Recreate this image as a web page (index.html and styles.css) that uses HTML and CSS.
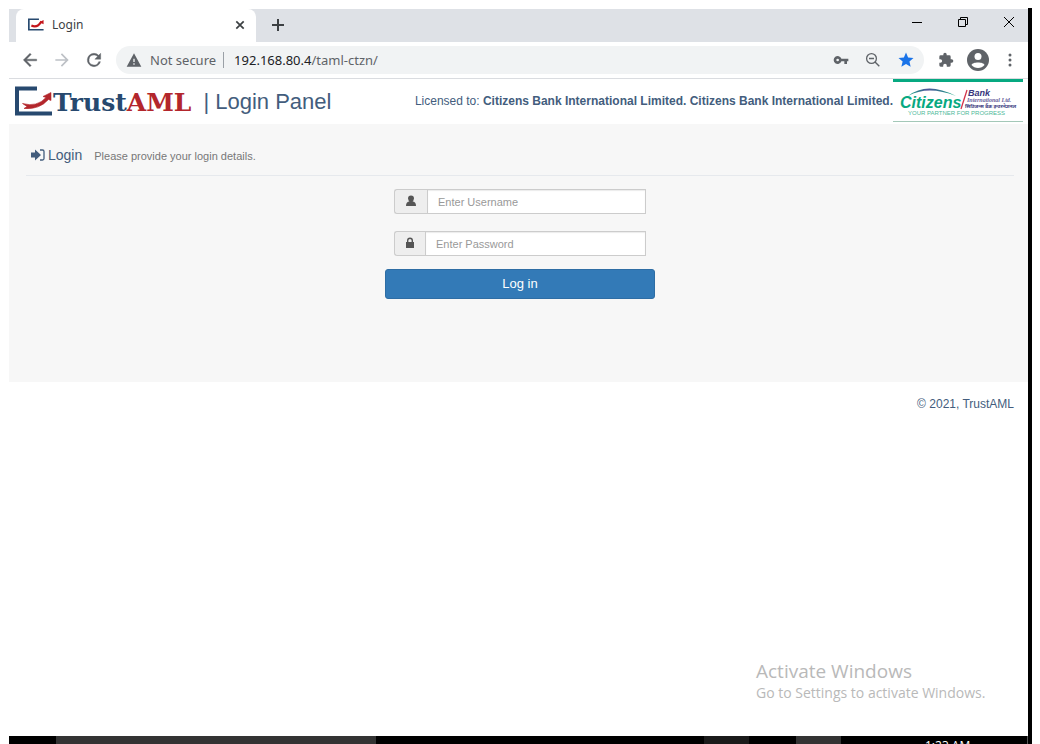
FILE: index.html
```html
<!DOCTYPE html>
<html lang="en">
<head>
<meta charset="utf-8">
<title>Login</title>
<link rel="stylesheet" href="styles.css">
</head>
<body>
<div class="screen">
  <header class="tabstrip">
    <div class="tab">
      <svg class="favicon" width="16" height="13" viewBox="0 0 38 29" aria-hidden="true"><path d="M26 2H2V27H37" fill="none" stroke="#27496f" stroke-width="4"/><path d="M8 17Q22 24 32 7" fill="none" stroke="#c4161c" stroke-width="5"/><path d="M27 9L37 4V14Z" fill="#c4161c"/></svg>
      <span class="tab-title">Login</span>
      <button class="tab-close" type="button" aria-label="Close tab"><svg width="10" height="10" viewBox="0 0 10 10"><path d="M1.3 1.3L8.7 8.7M8.7 1.3L1.3 8.7" stroke="#3c4043" stroke-width="1.7"/></svg></button>
    </div>
    <button class="new-tab" type="button" aria-label="New tab"><svg width="12" height="12" viewBox="0 0 12 12"><path d="M6 0V12M0 6H12" stroke="#3c4043" stroke-width="2"/></svg></button>
    <div class="window-controls">
      <button type="button" aria-label="Minimize"><svg width="10" height="10" viewBox="0 0 10 10"><path d="M0 5.5H10" stroke="#000"/></svg></button>
      <button type="button" aria-label="Restore"><svg width="10" height="10" viewBox="0 0 10 10"><path d="M.5 2.5H7.5V9.5H.5ZM2.5 2.5V.5H9.5V7.5H7.5" fill="none" stroke="#000"/></svg></button>
      <button type="button" aria-label="Close"><svg width="10" height="10" viewBox="0 0 10 10"><path d="M0 0L10 10M10 0L0 10" stroke="#000"/></svg></button>
    </div>
  </header>

  <nav class="toolbar">
    <button type="button" aria-label="Back"><svg width="20" height="20" viewBox="0 0 24 24"><path d="M20 11H7.8l5.6-5.6L12 4l-8 8 8 8 1.4-1.4L7.8 13H20z" fill="#5f6368" stroke="#5f6368" stroke-width=".5"/></svg></button>
    <button type="button" aria-label="Forward"><svg width="20" height="20" viewBox="0 0 24 24"><path d="M12 4l-1.4 1.4 5.6 5.6H4v2h12.2l-5.6 5.6L12 20l8-8z" fill="#bdc1c6"/></svg></button>
    <button type="button" aria-label="Reload"><svg width="20" height="20" viewBox="0 0 24 24"><path d="M17.65 6.35A7.96 7.96 0 0 0 12 4a8 8 0 1 0 7.73 10h-2.08A6 6 0 1 1 12 6c1.66 0 3.14.69 4.22 1.78L13 11h7V4z" fill="#5f6368" stroke="#5f6368" stroke-width=".5"/></svg></button>
    <div class="omnibox">
      <svg width="16" height="16" viewBox="0 0 24 24" aria-hidden="true"><path d="M1 22H23L12 2zM13 19H11V17H13zM13 15H11V10H13z" fill="#5f6368" fill-rule="evenodd"/></svg>
      <span class="security">Not secure</span>
      <span class="url"><span class="host">192.168.80.4</span>/taml-ctzn/</span>
      <span class="omnibox-actions">
        <svg width="16" height="16" viewBox="0 0 24 24" aria-hidden="true"><path d="M12.65 10A6 6 0 1 0 12.65 14H17V18H21V14H23V10ZM7 14A2 2 0 1 1 7 10A2 2 0 0 1 7 14Z" fill="#5f6368" fill-rule="evenodd"/></svg>
        <svg width="16" height="16" viewBox="0 0 16 16" aria-hidden="true"><path d="M10 10L14.3 14.3M4 6.5H9" stroke="#5f6368" stroke-width="1.4"/><circle cx="6.5" cy="6.5" r="4.9" fill="none" stroke="#5f6368" stroke-width="1.3"/></svg>
        <svg width="18" height="18" viewBox="0 0 24 24" aria-hidden="true"><path d="M12 17.3L18.2 21l-1.6-7L22 9.2l-7.2-.6L12 2 9.2 8.6 2 9.2 7.5 14l-1.7 7z" fill="#1a73e8"/></svg>
      </span>
    </div>
    <button class="extensions" type="button" aria-label="Extensions"><svg width="18" height="16" viewBox="0 0 24 24"><path d="M20.500 11H19V7a2 2 0 0 0-2-2h-4V3.500a2.500 2.500 0 0 0-5 0V5H4a2 2 0 0 0-2 2v3.800h1.500a2.700 2.700 0 0 1 0 5.400H2V20a2 2 0 0 0 2 2h3.800v-1.500a2.700 2.700 0 0 1 5.400 0V22H17a2 2 0 0 0 2-2v-4h1.500a2.500 2.500 0 0 0 0-5z" fill="#5f6368"/></svg></button>
    <button class="profile" type="button" aria-label="Profile"><svg width="22" height="22" viewBox="0 0 22 22"><circle cx="11" cy="11" r="11" fill="#5f6368"/><circle cx="11" cy="7.500" r="3.500" fill="#fff"/><path d="M4.500 16C5 12.500 17 12.500 17.500 16Q15 19 11 19T4.500 16Z" fill="#fff"/></svg></button>
    <button class="more" type="button" aria-label="Menu"><svg width="4" height="14" viewBox="0 0 4 14"><g fill="#5f6368"><circle cx="2" cy="2" r="1.500"/><circle cx="2" cy="7" r="1.500"/><circle cx="2" cy="12" r="1.500"/></g></svg></button>
  </nav>

  <div class="brandbar">
    <svg class="brand-mark" width="38" height="30" viewBox="0 0 38 30" aria-hidden="true"><path d="M22 2.500H2V27.500H37" fill="none" stroke="#27496f" stroke-width="4"/><path d="M7.500 17.500Q22 21.500 31 11.500L28 10.500L36 6.500L36 14.500L33.500 13.500Q24 24 9 22.500L12 20.500Z" fill="#b3262c" stroke="#b3262c" stroke-width=".6"/></svg>
    <span class="brand-name">Trust<span class="accent">AML</span></span>
    <h1 class="panel-title">| Login Panel</h1>
    <p class="license">Licensed to: <strong>Citizens Bank International Limited. Citizens Bank International Limited.</strong></p>
    <svg class="bank-logo" width="130" height="43" viewBox="0 0 130 43" role="img" aria-label="Citizens Bank International Ltd.">
      <defs><linearGradient id="arc"><stop offset="0" stop-color="#10aa80"/><stop offset=".4" stop-color="#50519b"/><stop offset="1" stop-color="#10aa80"/></linearGradient></defs>
      <path d="M0 1.500H130" stroke="#07a981" stroke-width="3"/><path d="M0 42.500H130" stroke="#a4c8b8"/>
      <path d="M15 17Q34 2 63 17Q35 6 15 17Z" fill="url(#arc)"/>
      <text class="bank-citizens" x="7" y="29">Citizens</text>
      <path d="M68 30L74 11" stroke="#d3344b" stroke-width="1.300"/>
      <text class="bank-bank" x="75" y="17">Bank</text>
      <text class="bank-intl" x="74" y="23">International Ltd.</text>
      <text class="bank-local" x="72" y="29">सिटिजन्स बैंक इन्टरनेशनल</text>
      <text class="bank-slogan" x="15" y="36">YOUR PARTNER FOR PROGRESS</text>
    </svg>
  </div>

  <main class="content">
    <div class="content-head">
      <svg width="14" height="12" viewBox="0 0 14 12" aria-hidden="true"><path d="M0 3.500H4V.500L10 6L4 11.500V8.500H0Z" fill="#435d7d"/><path d="M9 1H11.500Q13 1 13 2.500V9.500Q13 11 11.500 11H9" fill="none" stroke="#435d7d" stroke-width="1.300"/></svg>
      <h2>Login</h2>
      <small>Please provide your login details.</small>
    </div>
    <form class="login-form">
      <div class="input-group">
        <label class="addon" for="username" aria-label="Username"><svg width="12" height="12" viewBox="0 0 12 12"><path d="M3 3.500A3 3 0 0 1 9 3.500Q8.500 6 7.500 6.500Q11 6.500 11 11H1Q1 6.500 4.500 6.500Q3.500 6 3 3.500Z" fill="#555"/></svg></label>
        <input id="username" type="text" placeholder="Enter Username">
      </div>
      <div class="input-group">
        <label class="addon addon-lock" for="password" aria-label="Password"><svg width="10" height="12" viewBox="0 0 10 12"><path d="M1 5H9V11H1Z" fill="#555"/><path d="M2.700 5V3.500Q2.700 1.300 5 1.300T7.300 3.500V5" fill="none" stroke="#555" stroke-width="1.400"/></svg></label>
        <input id="password" type="password" placeholder="Enter Password">
      </div>
      <button class="submit" type="submit">Log in</button>
    </form>
  </main>

  <footer class="footer">© 2021, TrustAML</footer>

  <aside class="watermark">
    <p class="watermark-title">Activate Windows</p>
    <p>Go to Settings to activate Windows.</p>
  </aside>

  <div class="taskbar">
    <span class="task-search"></span>
    <span class="task-item"></span>
    <span class="task-item task-item-active"></span>
    <time class="clock">1:23 AM</time>
    <span class="show-desktop"></span>
  </div>
</div>
</body>
</html>
```
FILE: styles.css
```css
* { box-sizing: border-box; }

body {
  margin: 0;
  height: 100vh;
  padding: 8px 8px 0 9px;
  overflow: hidden;
  background: #fff;
  font-family: "Liberation Sans", Arial, sans-serif;
  font-size: 12px;
  color: #435d7d;
}

h1, h2, p { margin: 0; font-weight: 400; }
svg { display: block; flex: none; }

button {
  display: flex;
  align-items: center;
  justify-content: center;
  padding: 0;
  border: 0;
  background: none;
}

.screen {
  display: flex;
  flex-direction: column;
  height: 100%;
  padding-top: 1px;
  border-right: 4px solid #000;
}

/* Browser window */
.tabstrip {
  display: flex;
  height: 33px;
  flex: none;
  padding-left: 7px;
  background: #dee1e6;
}

.tab {
  display: flex;
  align-items: center;
  width: 240px;
  padding: 0 11px 2px 12px;
  border-radius: 8px 8px 0 0;
  background: #fff;
}

.tab-title {
  flex: 1;
  padding-left: 8px;
  font: 12px "Noto Sans", sans-serif;
  color: #3c4043;
}

.new-tab { width: 44px; padding-bottom: 2px; }

.window-controls {
  display: flex;
  align-items: flex-start;
  margin-left: auto;
}

.window-controls button { width: 46px; height: 26px; }
.window-controls button:last-child { width: 38px; margin-left: 4px; }

.toolbar {
  display: flex;
  align-items: center;
  gap: 12px;
  height: 37px;
  flex: none;
  padding: 0 16px 0 11px;
  border-bottom: 1px solid #dadce0;
}

.omnibox {
  display: flex;
  flex: 1;
  align-items: center;
  height: 28px;
  padding: 0 9px 0 10px;
  border-radius: 14px;
  background: #f1f3f4;
  font: 13px "Noto Sans", sans-serif;
  color: #5f6368;
}

.security {
  margin: 0 10px 0 8px;
  padding-right: 7px;
  border-right: 1px solid #9aa0a6;
  line-height: 16px;
}

.host { color: #202124; }

.omnibox-actions {
  display: flex;
  align-items: center;
  gap: 16px;
  margin-left: auto;
}

.extensions { margin-left: 1px; }
.more { margin-left: 7px; }

/* Page header */
.brandbar {
  display: flex;
  align-items: center;
  height: 45px;
  flex: none;
  padding: 0 5px 2px 6px;
}

.brand-name {
  padding-top: 4px;
  font: bold 25px/38px "DejaVu Serif", serif;
  color: #27496f;
}

.accent { color: #b3262c; }

.panel-title {
  margin-left: 12px;
  padding-top: 2px;
  font-size: 22px;
  white-space: nowrap;
}

.license { margin-left: auto; white-space: nowrap; }

.bank-citizens { font: italic bold 16px "Liberation Sans", sans-serif; fill: #07a981; }
.bank-bank { font: italic bold 9px "Liberation Sans", sans-serif; fill: #38377d; }
.bank-intl { font: italic bold 6px "Liberation Serif", serif; fill: #67609b; }
.bank-local { font: bold 5px "Noto Sans", sans-serif; fill: #38377d; }
.bank-slogan { font: 6px "Liberation Sans", sans-serif; fill: #4cb998; }

/* Login section */
.content {
  flex: none;
  min-height: 258px;
  padding: 12px 14px 40px 17px;
  background: #f7f7f7;
}

.content-head {
  display: flex;
  align-items: center;
  height: 40px;
  padding: 0 0 2px 5px;
  border-bottom: 1px solid #e6e9ed;
}

.content-head h2 { margin: 0 12px 0 3px; font-size: 14px; }
.content-head small { padding-top: 2px; font-size: 11px; color: #777; }

.login-form {
  display: flex;
  flex-direction: column;
  width: 270px;
  margin: 13px auto 0;
}

.input-group {
  display: flex;
  height: 25px;
  margin: 0 9px 17px;
}

.input-group + .submit { margin-top: -4px; }

.addon {
  display: flex;
  align-items: center;
  justify-content: center;
  width: 33px;
  padding-bottom: 2px;
  border: 1px solid #ccc;
  border-right: 0;
  border-radius: 3px 0 0 3px;
  background: #eee;
}

.addon-lock { width: 31px; }

.input-group input {
  flex: 1;
  min-width: 0;
  padding: 0 10px;
  border: 1px solid #ccc;
  border-radius: 0;
  background: #fff;
  box-shadow: inset 0 1px 1px #ececec;
  font: 11px "Liberation Sans", Arial, sans-serif;
  color: #555;
}

.input-group input::placeholder { color: #999; opacity: 1; }

.submit {
  height: 30px;
  padding-bottom: 2px;
  border: 1px solid #2e6da4;
  border-radius: 3px;
  background: #337ab7;
  font: 13px "Liberation Sans", Arial, sans-serif;
  color: #fff;
}

.footer {
  padding: 15px 14px 0;
  text-align: right;
}

/* Desktop */
.watermark {
  width: 272px;
  margin: auto 0 32px auto;
  font: 14px/22px "Open Sans", sans-serif;
  color: #b9b9b9;
}

.watermark-title { font-size: 19px; }

.taskbar {
  display: flex;
  height: 8px;
  flex: none;
  padding-left: 47px;
  overflow: hidden;
  background: #000;
}

.task-search { width: 320px; margin-right: auto; background: #333; }
.task-item { width: 45px; margin-right: 47px; background: #1a1a1a; }
.task-item-active { margin-right: 84px; background: #333; }

.clock {
  width: 102px;
  padding-top: 1px;
  font: 12px "Open Sans", sans-serif;
  color: #fff;
}

.show-desktop { width: 1px; background: #555; }
```
